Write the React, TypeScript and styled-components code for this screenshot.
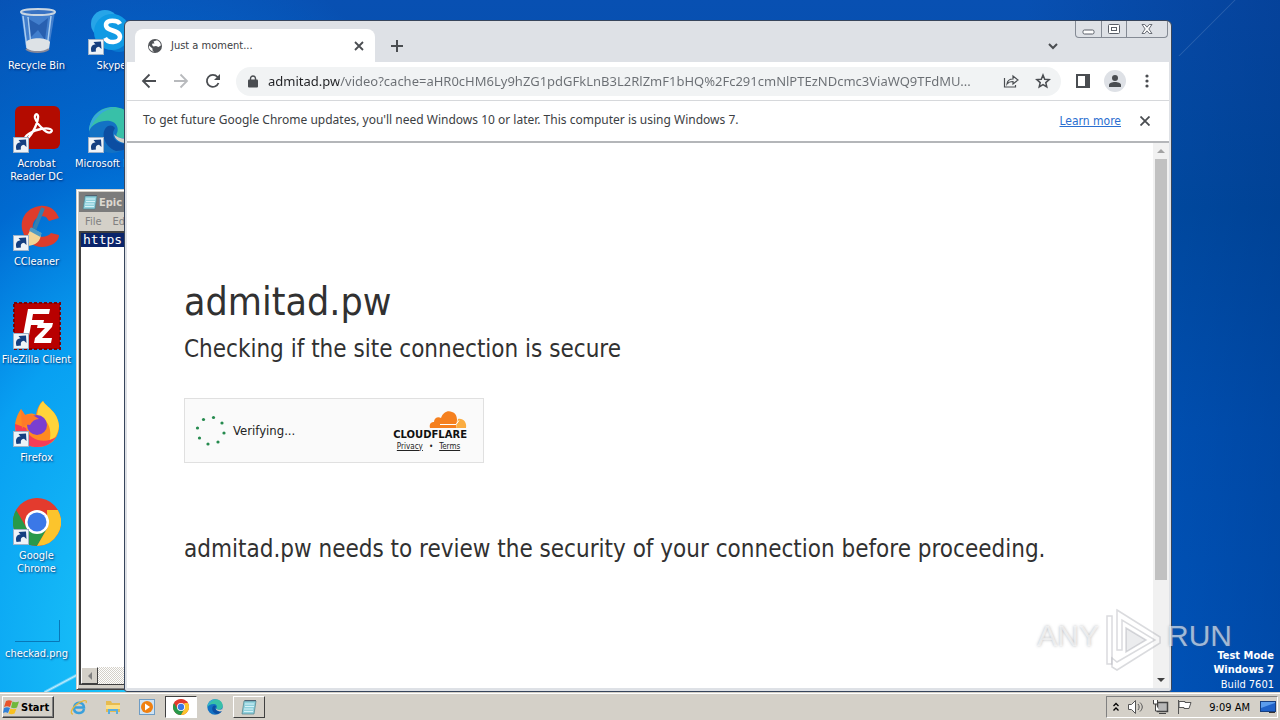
import React from "react";
import styled, { createGlobalStyle } from "styled-components";

const UI = '"DejaVu Sans Condensed", "DejaVu Sans", Tahoma, sans-serif';
const TEXT = '"Noto Sans", Tahoma, sans-serif';

const GlobalStyle = createGlobalStyle`
  * { box-sizing: border-box; }
  body { margin: 0; overflow: hidden; font-family: ${UI}; font-size: 11px; }
  h1, h2, p { margin: 0; font-weight: 400; }
  button, input { font-family: inherit; margin: 0; padding: 0; border: 0; background: none; }
  svg { display: block; flex: none; }
`;

const Screen = styled.div`
  display: flex;
  flex-direction: column;
  height: 100vh;
`;

const Desktop = styled.main`
  position: relative;
  flex: 1;
  min-height: 0;
  overflow: hidden;
  background:
    linear-gradient(135deg, transparent 49%, rgba(255, 255, 255, 0.12) 50%, transparent 51%) right 40px top 0 / 66px 56px no-repeat,
    linear-gradient(152deg, transparent 44%, rgba(255, 255, 255, 0.75) 50%, transparent 56%) left 44px bottom 0 / 36px 18px no-repeat,
    linear-gradient(90deg, transparent 80%, rgba(0, 40, 110, 0.35) 100%),
    radial-gradient(ellipse 34% 105% at 11% 95%, #1cc8fa 0%, #08a0f2 45%, rgba(0, 118, 226, 0.7) 68%, transparent 100%),
    linear-gradient(180deg, #0850b2 0%, #0050aa 30%, #0058c0 62%, #005cc8 100%);
`;

const Shortcuts = styled.nav`
  display: flex;
  gap: 2px;
  padding-top: 8px;
`;

const ShortcutColumn = styled.div`
  display: flex;
  flex-direction: column;
  gap: 24px;
  width: 73px;
`;

const Shortcut = styled.button`
  display: flex;
  flex-direction: column;
  align-items: center;
  justify-content: flex-start;
  gap: 3px;
  height: 74px;
  color: #fff;
  font-size: 11px;
  line-height: 13px;
  white-space: nowrap;
  text-shadow: 1px 1px 2px rgba(0, 20, 80, 0.8);
`;

const AppWindow = styled.section`
  position: absolute;
  z-index: 2;
  top: 20px;
  right: 108px;
  bottom: 0;
  left: 124px;
  display: flex;
  flex-direction: column;
  padding: 0 2px 3px;
  border: 1px solid #37455c;
  border-radius: 6px 6px 3px 3px;
  background: #dee1e6;
`;

const TabStrip = styled.header`
  display: flex;
  align-items: flex-start;
  height: 41px;
  padding: 0 1px 0 8px;
`;

const Tab = styled.div`
  display: flex;
  align-items: center;
  gap: 8px;
  width: 240px;
  height: 33px;
  margin-top: 8px;
  padding: 0 10px 0 12px;
  border-radius: 8px 8px 0 0;
  background: #fff;
  color: #3c4043;
`;

const TabTitle = styled.span`
  flex: 1;
  font-size: 11px;
`;

const IconButton = styled.button<{ $w?: number; $h?: number; $round?: boolean }>`
  display: flex;
  flex: none;
  align-items: center;
  justify-content: center;
  width: ${(p) => p.$w ?? 32}px;
  height: ${(p) => p.$h ?? 32}px;
  border-radius: ${(p) => (p.$round ? "50%" : "0")};
  background: ${(p) => (p.$round ? "#dee1e6" : "none")};
  color: #4a4d51;
`;

const NewTab = styled(IconButton)`
  width: 28px;
  height: 28px;
  margin: 11px auto 0 8px;
`;

const TabSearch = styled(IconButton)`
  width: 24px;
  height: 24px;
  margin: 13px 10px 0 0;
`;

const Caption = styled.div`
  display: flex;
  height: 17px;
  border: 1px solid #848a94;
  border-top: 0;
  border-radius: 0 0 4px 4px;
`;

const CaptionButton = styled.button<{ $wide?: boolean }>`
  display: flex;
  align-items: center;
  justify-content: center;
  width: ${(p) => (p.$wide ? 41 : 25)}px;
  & + & { border-left: 1px solid #848a94; }
`;

const Toolbar = styled.div`
  display: flex;
  align-items: center;
  height: 39px;
  padding: 0 1px 0 6px;
  border-bottom: 1px solid #d6d8db;
  background: #fff;
`;

const Omnibox = styled.label`
  display: flex;
  flex: 1;
  align-items: center;
  gap: 10px;
  min-width: 0;
  height: 29px;
  margin: 0 1px 0 7px;
  padding: 0 7px 0 12px;
  border-radius: 15px;
  background: #f1f3f4;
  color: #4a4d51;
`;

const Address = styled.input`
  flex: 1;
  min-width: 0;
  height: 20px;
  font-family: ${TEXT};
  font-size: 13px;
  color: #5f6368;
  background: linear-gradient(90deg, #202124 71px, #6a6e73 71px);
  background-clip: text;
  -webkit-text-fill-color: transparent;
  text-overflow: ellipsis;
`;

const InfoBar = styled.div`
  display: flex;
  align-items: center;
  height: 42px;
  padding: 0 8px 0 16px;
  border-bottom: 2px solid #b4b6b9;
  background: #fff;
  color: #3c4043;
  font-size: 12px;
`;

const InfoText = styled.p`
  flex: 1;
  font-family: ${TEXT};
  line-height: 18px;
  padding-bottom: 2px;
`;

const InfoLink = styled.a`
  margin-right: 8px;
  color: #2a6ed0;
`;

const Viewport = styled.div`
  display: flex;
  flex: 1;
  min-height: 0;
  background: #fff;
`;

const Page = styled.article`
  flex: 1;
  padding: 129px 24px 0 57px;
  color: #313131;
`;

const Host = styled.h1`
  font-size: 39px;
  line-height: 60px;
`;

const Lead = styled.h2`
  font-size: 24px;
  line-height: 34px;
`;

const Note = styled.p`
  margin-top: 69px;
  font-size: 24px;
  line-height: 34px;
`;

const Challenge = styled.div`
  display: flex;
  align-items: center;
  width: 300px;
  height: 65px;
  margin-top: 32px;
  padding: 0 16px 0 10px;
  border: 1px solid #e0e0e0;
  background: #fafafa;
  color: #232323;
`;

const Status = styled.span`
  flex: 1;
  margin-left: 6px;
  font-size: 13px;
`;

const Brand = styled.div`
  display: flex;
  flex-direction: column;
  align-items: flex-end;
  width: 78px;
`;

const Wordmark = styled.strong`
  width: 78px;
  color: #111;
  font: 700 10px/11px "DejaVu Sans", sans-serif;
  text-align: right;
`;

const Legal = styled.div`
  display: flex;
  justify-content: center;
  gap: 6px;
  width: 78px;
  padding-left: 1px;
  margin-top: 2px;
  font-size: 8px;
  line-height: 10px;
  a { color: #232323; }
`;

const ScrollTrack = styled.div`
  display: flex;
  flex-direction: column;
  align-items: center;
  width: 16px;
  background: #f1f1f1;
`;

const ScrollButton = styled.button`
  display: flex;
  align-items: center;
  justify-content: center;
  width: 16px;
  height: 16px;
`;

const ScrollRest = styled.div`
  display: flex;
  flex: 1;
  width: 12px;
`;

const ScrollThumb = styled.div`
  width: 12px;
  height: 82%;
  background: #c1c1c1;
`;

const NotepadWindow = styled.section`
  position: absolute;
  z-index: 1;
  top: 189px;
  right: 40%;
  bottom: 2px;
  left: 76px;
  display: flex;
  flex-direction: column;
  padding: 2px;
  border: 1px solid #d4d0c8;
  border-bottom-color: #404040;
  box-shadow: inset 1px 1px #fff, inset -1px -1px #808080;
  background: #d4d0c8;
`;

const NotepadTitle = styled.div`
  display: flex;
  align-items: center;
  gap: 1px;
  height: 20px;
  padding-left: 3px;
  background: #7c7c7c;
  color: #dcd8d0;
  font-size: 11px;
  font-weight: 700;
`;

const NotepadMenu = styled.div`
  display: flex;
  align-items: center;
  gap: 11px;
  height: 19px;
  padding-left: 6px;
  button { color: #808080; font-size: 11px; }
`;

const NotepadBody = styled.div`
  display: flex;
  flex: 1;
  flex-direction: column;
  border: 2px solid #404040;
  border-width: 2px 1px 1px 2px;
  margin-bottom: 2px;
  background: #fff;
`;

const NotepadLine = styled.p`
  flex: 1;
  font: 13px/14px "DejaVu Sans Mono", monospace;
  span { display: inline-block; width: 100%; padding-left: 2px; background: #0a246a; color: #fff; }
`;

const NotepadScroll = styled.div`
  height: 17px;
  background: repeating-conic-gradient(#fff 0 25%, #d4d0c8 0 50%) 0 0 / 2px 2px;
`;

const NotepadScrollButton = styled.button`
  display: flex;
  align-items: center;
  justify-content: center;
  width: 17px;
  height: 17px;
  border: 1px solid;
  border-color: #fff #404040 #404040 #fff;
  background: #d4d0c8;
`;

const BuildInfo = styled.div`
  position: absolute;
  right: 6px;
  bottom: 0;
  color: #fff;
  font-size: 11px;
  line-height: 14px;
  text-align: right;
  p { line-height: 15px; }
`;

const Watermark = styled.div`
  position: absolute;
  z-index: 3;
  right: 48px;
  bottom: 20px;
  display: flex;
  align-items: center;
  gap: 5px;
  color: rgba(255, 255, 255, 0.6);
  font: 30px/36px "Liberation Sans", sans-serif;
  text-shadow: 0 0 3px rgba(90, 95, 105, 0.45);
  pointer-events: none;
  span { margin-bottom: 8px; }
`;

const Taskbar = styled.footer`
  display: flex;
  flex: none;
  align-items: center;
  height: 28px;
  padding: 1px 2px 0 2px;
  border-top: 1px solid #d4d0c8;
  box-shadow: inset 0 1px #fff;
  background: #d4d0c8;
`;

const StartButton = styled.button`
  display: flex;
  align-items: center;
  gap: 1px;
  width: 52px;
  height: 22px;
  margin-right: 9px;
  border: 1px solid;
  border-color: #fff #404040 #404040 #fff;
  box-shadow: inset -1px -1px #808080;
  font-size: 11px;
  font-weight: 700;
`;

const TaskButton = styled.button<{ $state?: "active" | "open" }>`
  display: flex;
  align-items: center;
  justify-content: center;
  width: 32px;
  height: 22px;
  margin-right: 2px;
  border: 1px solid transparent;
  border-color: ${(p) =>
    p.$state === "active" ? "#404040 #fff #fff #404040" : p.$state === "open" ? "#fff #404040 #404040 #fff" : "transparent"};
  background: ${(p) => (p.$state === "active" ? "#fff" : "none")};
`;

const Tray = styled.div`
  display: flex;
  align-items: center;
  gap: 7px;
  height: 22px;
  margin-left: auto;
  padding: 0 1px 0 5px;
  border: 1px solid;
  border-color: #808080 #fff #fff #808080;
  font-size: 11px;
  time { margin: 0 3px 0 9px; }
`;

const ShortcutArrow = () => (
  <g transform="translate(0 31)">
    <rect x=".5" y=".5" width="15" height="15" fill="#eef3f8" stroke="#9fb2c8" />
    <path d="M3.500 13C2 8 4 5.500 7.500 5.500L5.500 3l7.500-.5.500 7.500-2.500-2.200C8 8 7.500 10 8 12.500z" fill="#153f80" />
  </g>
);

const IconBox = ({ children, arrow = true }: { children?: React.ReactNode; arrow?: boolean }) => (
  <svg width="48" height="48" viewBox="0 0 48 48">
    {children}
    {arrow && <ShortcutArrow />}
  </svg>
);

const ChromeMark = () => (
  <g>
    <circle cx="24" cy="24" r="24" fill="#e33b2e" />
    <path d="M3.2 12A24 24 0 0 0 24 48L34.4 30 24 24z" fill="#28994a" />
    <path d="M44.8 12A24 24 0 0 1 24 48L34.4 30 34 12z" fill="#fcc42c" />
    <path d="M24 12H44.8L40 7 24 0 8 6 3.2 12l10.4 18z" fill="#e33b2e" />
    <circle cx="24" cy="24" r="12" fill="#fff" />
    <circle cx="24" cy="24" r="9.5" fill="#3b78e7" />
  </g>
);

const EdgeMark = () => (
  <g>
    <circle cx="24" cy="24" r="23" fill="#1372c4" />
    <path d="M1 25C2 10 12 1 25 1c13 0 22 9 22 19 0 8-6 12-12 12-5 0-8-2-6-5 2-4 0-11-7-12C13 14 4 18 1 25z" fill="#38c0a8" />
    <path d="M1 25C2 10 14 0 28 2 14 3 7 12 1 25z" fill="#37a9dc" />
    <path d="M20 20c-8 5-5 20 8 25 8 0 13-3 17-9-10 4-20 0-20-8 0-3 1-4 2-6-2-3-5-3-7-2z" fill="#0c4ea2" />
    <path d="M26 28c1 8 11 11 19 8l2-8c-5 7-18 5-21 0z" fill="#d4d0c8" />
  </g>
);

const NotepadMark = () => (
  <g>
    <path d="M3 2h12l-2 13H1z" fill="#8fd0dc" stroke="#4d7f8a" strokeWidth=".7" />
    <path d="M4 5h9M4 7.500h9M3 10h9M3 12.500h9" stroke="#e8fbff" strokeWidth=".8" />
    <path d="M3 2h12v-1H4z" fill="#506070" />
  </g>
);

const WinFlag = () => (
  <svg width="17" height="16" viewBox="0 0 17 16">
    <path d="M3 2c2-1 4-1 6 0L7 8C5 7 3 7 1 8z" fill="#e8542c" />
    <path d="M9.500 2.500c2 1 4 1 6.500 0l-2 6c-2 1-4 1-6 0z" fill="#70b83c" />
    <path d="M1 9c2-1 4-1 6 0l-2 5c-2-1-3-1-5 0z" fill="#3080d8" />
    <path d="M7.500 9.500c2 1 4 1 6 0l-2 5c-2 1-4 1-6 0z" fill="#f8c020" />
  </svg>
);

export default function App() {
  return (
    <Screen>
      <GlobalStyle />
      <Desktop>
        <Shortcuts>
          <ShortcutColumn>
            <Shortcut>
              <IconBox arrow={false}>
                <path d="M8 4l5 36c5 5 19 5 23 0l6-36z" fill="#4e86d0" opacity=".85" />
                <path d="M14 10l3 20 8-8 7 10 3-22-9 7z" fill="#174b9c" opacity=".6" />
                <path d="M10 8l4 32M15 9l3 28M38 8l-4 32" stroke="#a9cdf0" strokeWidth="1.500" />
                <path d="M13 34c4-5 20-5 24 0l-1 7c-5 4-17 4-22 0z" fill="#dde2e6" />
                <ellipse cx="25" cy="4" rx="17" ry="3" fill="#3973c3" stroke="#c9d6e2" strokeWidth="2" />
                <path d="M13 41c6 4 17 4 23 0" stroke="#889" strokeWidth="2" fill="none" />
              </IconBox>
              Recycle Bin
            </Shortcut>
            <Shortcut>
              <IconBox>
                <rect x="2" y="0" width="45" height="43" rx="6" fill="#b30b00" />
                <path d="M13 33c-4-2 7-9 15-10 8-2 13 1 10 3-4 3-14-8-16-14-1-5 4-5 3 0-1 8-8 20-12 21z" fill="none" stroke="#fff" strokeWidth="2.300" />
              </IconBox>
              Acrobat<br />Reader DC
            </Shortcut>
            <Shortcut>
              <IconBox>
                <path d="M46 14C42 4 34 1 27 2 12 4 6 17 10 28c3 13 17 18 28 13 5-2 8-6 8-10l-8-2c-5 6-16 5-18-4-2-8 6-15 13-12l3 4z" fill="#dd3c2c" />
                <path d="M30 4l-9 22" stroke="#357fae" strokeWidth="4" />
                <path d="M18 24l10 5c0 8-5 13-15 13H3c8-3 11-8 15-18z" fill="#f2d596" />
                <path d="M17 25l11 6" stroke="#4f9bc4" strokeWidth="4" />
              </IconBox>
              CCleaner
            </Shortcut>
            <Shortcut>
              <IconBox>
                <rect x="1" y="1" width="46" height="46" fill="#b80000" stroke="#7c0204" strokeWidth="2" strokeDasharray="3 2" />
                <path d="M15 7h22l-1 5H20l-1 6h12l-1 5H18l-3 16H9z" fill="#fff" />
                <path d="M25 21h15l-1 4-10 11h10l-1 5H21l1-5 10-10h-8z" fill="#fff" />
              </IconBox>
              FileZilla Client
            </Shortcut>
            <Shortcut>
              <IconBox>
                <path d="M30 1c3 6 15 10 16 25 0 13-9 21-22 21S1 38 2 24C3 18 5 13 8 9l4 6c4-2 8-2 11 0 1-6 3-11 7-14z" fill="#ff8a20" />
                <path d="M30 1c3 6 15 10 16 25-1 9-5 14-10 17 3-9 1-20-5-23l-7-4c1-7 2-11 6-15z" fill="#ffd43a" />
                <path d="M2 24c0 14 9 23 22 23 9 0 15-4 19-10-10 7-27 4-30-9-4-2-8-3-11-4z" fill="#f43c58" />
                <circle cx="24" cy="25" r="10" fill="#7a3ed0" />
                <path d="M8 9l4 6c6-1 9 0 14 4-4 0-7 2-9 6-4-1-7 1-8 4z" fill="#ff7a28" />
              </IconBox>
              Firefox
            </Shortcut>
            <Shortcut>
              <IconBox><ChromeMark /></IconBox>
              Google<br />Chrome
            </Shortcut>
            <Shortcut>
              <IconBox arrow={false}>
                <path d="M2 45.500H46.500V24" fill="none" stroke="#0878b8" />
              </IconBox>
              checkad.png
            </Shortcut>
          </ShortcutColumn>
          <ShortcutColumn>
            <Shortcut>
              <IconBox>
                <circle cx="17" cy="16" r="14" fill="#27a5e8" />
                <circle cx="31" cy="30" r="14" fill="#0878d0" />
                <circle cx="24" cy="24" r="18" fill="#109ae4" />
                <path d="M32 16c-2-4-14-5-14 1 0 7 14 4 14 12 0 6-12 7-15 1" fill="none" stroke="#fff" strokeWidth="4.500" />
              </IconBox>
              Skype
            </Shortcut>
            <Shortcut>
              <IconBox><EdgeMark /></IconBox>
              Microsoft Edge
            </Shortcut>
          </ShortcutColumn>
        </Shortcuts>

        <NotepadWindow>
          <NotepadTitle>
            <svg width="16" height="16" viewBox="0 0 16 16"><NotepadMark /></svg>
            Epic
          </NotepadTitle>
          <NotepadMenu>
            <button>File</button>
            <button>Edit</button>
          </NotepadMenu>
          <NotepadBody>
            <NotepadLine><span>https</span></NotepadLine>
            <NotepadScroll>
              <NotepadScrollButton aria-label="Scroll left">
                <svg width="6" height="8" viewBox="0 0 6 8"><path d="M5 0v8L1 4z" fill="#808080" /></svg>
              </NotepadScrollButton>
            </NotepadScroll>
          </NotepadBody>
        </NotepadWindow>

        <AppWindow>
          <TabStrip>
            <Tab>
              <svg width="16" height="16" viewBox="0 0 16 16">
                <circle cx="8" cy="8" r="7" fill="#505357" />
                <path d="M2 7.500l3.500 3v2l1.500 1C4 13.500 1.500 11 2 7.500zM6.500 3.500L10 2.200c2.500 1 4 3.200 3.800 5.300L11.500 9 9 8l-2.500.5L5 7l.5-1.500h2z" fill="#fff" />
              </svg>
              <TabTitle>Just a moment...</TabTitle>
              <IconButton $w={12} $h={16} aria-label="Close tab">
                <svg width="10" height="10" viewBox="0 0 10 10" stroke="currentColor" strokeWidth="1.800"><path d="M1 1l8 8M9 1L1 9" /></svg>
              </IconButton>
            </Tab>
            <NewTab aria-label="New tab">
              <svg width="12" height="12" viewBox="0 0 12 12" stroke="currentColor" strokeWidth="2"><path d="M6 0v12M0 6h12" /></svg>
            </NewTab>
            <TabSearch aria-label="Search tabs">
              <svg width="10" height="7" viewBox="0 0 10 7" fill="none" stroke="currentColor" strokeWidth="2"><path d="M1 1l4 4 4-4" /></svg>
            </TabSearch>
            <Caption>
              <CaptionButton aria-label="Minimize">
                <svg width="13" height="12" viewBox="0 0 13 12" fill="#fff" stroke="#5a5f68"><rect x="1" y="7" width="11" height="4" rx="1.500" /></svg>
              </CaptionButton>
              <CaptionButton aria-label="Maximize">
                <svg width="13" height="11" viewBox="0 0 13 11" fill="#fff" stroke="#5a5f68"><rect x=".5" y=".5" width="11" height="9" rx="1" /><rect x="3.500" y="3.500" width="5" height="3" /></svg>
              </CaptionButton>
              <CaptionButton $wide aria-label="Close">
                <svg width="12" height="10" viewBox="0 0 13 11" fill="#fff" stroke="#5a5f68"><path d="M1 .5h3l2.500 3L9 .5h3l-3.500 5L12 10.500H9l-2.500-3-2.500 3H1l3.500-5z" /></svg>
              </CaptionButton>
            </Caption>
          </TabStrip>

          <Toolbar>
            <IconButton aria-label="Back">
              <svg width="16" height="16" viewBox="0 0 16 16" fill="none" stroke="currentColor" strokeWidth="1.800"><path d="M15 8H2M8.500 1.500L2 8l6.500 6.500" /></svg>
            </IconButton>
            <IconButton aria-label="Forward">
              <svg width="16" height="16" viewBox="0 0 16 16" fill="none" stroke="#b8babd" strokeWidth="1.800"><path d="M1 8h13M7.500 1.500L14 8l-6.500 6.500" /></svg>
            </IconButton>
            <IconButton aria-label="Reload">
              <svg width="16" height="16" viewBox="0 0 16 16" fill="none" stroke="currentColor" strokeWidth="1.800"><path d="M13.500 10A6 6 0 1 1 12.500 4L14 6" /><path d="M15 1v6H9z" fill="currentColor" stroke="none" /></svg>
            </IconButton>
            <Omnibox>
              <svg width="10" height="13" viewBox="0 0 10 13"><rect y="4.500" width="10" height="8" rx="1" fill="currentColor" /><path d="M2.500 5V3.500a2.500 2.500 0 0 1 5 0V5" fill="none" stroke="currentColor" strokeWidth="1.400" /></svg>
              <Address
                aria-label="Address and search bar"
                defaultValue="admitad.pw/video?cache=aHR0cHM6Ly9hZG1pdGFkLnB3L2RlZmF1bHQ%2Fc291cmNlPTEzNDcmc3ViaWQ9TFdMU..."
              />
              <IconButton $w={22} aria-label="Share">
                <svg width="16" height="16" viewBox="0 0 16 16" fill="none" stroke="currentColor" strokeWidth="1.200"><path d="M1.500 5v9h11v-2M4 11c.5-4 3-5 6-5V3l5 4-5 4V8.500c-3 0-4.500.5-6 2.500z" /></svg>
              </IconButton>
              <IconButton $w={22} aria-label="Bookmark">
                <svg width="16" height="16" viewBox="0 0 16 16" fill="none" stroke="currentColor" strokeWidth="1.500"><path d="M8 2l1.700 4.200 4.500.4-3.400 3 1 4.400L8 11.600 4.200 14l1-4.400-3.400-3 4.500-.4z" /></svg>
              </IconButton>
            </Omnibox>
            <IconButton $w={42} aria-label="Side panel">
              <svg width="14" height="14" viewBox="0 0 14 14"><rect x="1" y="1" width="12" height="12" fill="none" stroke="currentColor" strokeWidth="2" /><path d="M9 1h4v12H9z" fill="currentColor" /></svg>
            </IconButton>
            <IconButton $w={22} $h={22} $round aria-label="Profile">
              <svg width="12" height="12" viewBox="0 0 12 12" fill="currentColor"><circle cx="6" cy="3" r="3" /><path d="M0 12v-2c0-4 12-4 12 0v2z" /></svg>
            </IconButton>
            <IconButton $w={42} aria-label="Menu">
              <svg width="4" height="14" viewBox="0 0 4 14" fill="currentColor"><circle cx="2" cy="2" r="1.600" /><circle cx="2" cy="7" r="1.600" /><circle cx="2" cy="12" r="1.600" /></svg>
            </IconButton>
          </Toolbar>

          <InfoBar>
            <InfoText>To get future Google Chrome updates, you'll need Windows 10 or later. This computer is using Windows 7.</InfoText>
            <InfoLink href="#learn">Learn more</InfoLink>
            <IconButton aria-label="Dismiss">
              <svg width="10" height="10" viewBox="0 0 10 10" stroke="currentColor" strokeWidth="1.800"><path d="M.5.5l9 9M9.500.5l-9 9" /></svg>
            </IconButton>
          </InfoBar>

          <Viewport>
            <Page>
              <Host>admitad.pw</Host>
              <Lead>Checking if the site connection is secure</Lead>
              <Challenge>
                <svg width="32" height="32" viewBox="0 0 32 32" fill="#258a4e">
                  <circle cx="18.500" cy="2.500" r="1.600" /><circle cx="27" cy="8" r="1.600" /><circle cx="29" cy="18" r="1.600" />
                  <circle cx="23" cy="27" r="1.600" /><circle cx="13" cy="29" r="1.600" /><circle cx="4.500" cy="23" r="1.600" />
                  <circle cx="2.500" cy="13" r="1.600" /><circle cx="8.500" cy="4.500" r="1.600" />
                </svg>
                <Status>Verifying...</Status>
                <Brand>
                  <svg width="38" height="19" viewBox="0 0 38 19">
                    <path d="M1 18c-1-4 1-6 4-6 0-4 4-6 7-4C14 2 19 0 23 2c4 1 5 5 5 8l-1 8z" fill="#f5801f" />
                    <path d="M27 18l2-9c5-1 9 3 8 9z" fill="#fbad41" />
                    <path d="M11 14.500h16l3-4" fill="none" stroke="#fff" />
                  </svg>
                  <Wordmark>CLOUDFLARE</Wordmark>
                  <Legal><a href="#privacy">Privacy</a><span>•</span><a href="#terms">Terms</a></Legal>
                </Brand>
              </Challenge>
              <Note>admitad.pw needs to review the security of your connection before proceeding.</Note>
            </Page>
            <ScrollTrack>
              <ScrollButton aria-label="Scroll up">
                <svg width="8" height="4" viewBox="0 0 8 4"><path d="M0 4h8L4 0z" fill="#a3a3a3" /></svg>
              </ScrollButton>
              <ScrollRest><ScrollThumb /></ScrollRest>
              <ScrollButton aria-label="Scroll down">
                <svg width="8" height="4" viewBox="0 0 8 4"><path d="M0 0h8L4 4z" fill="#404040" /></svg>
              </ScrollButton>
            </ScrollTrack>
          </Viewport>
        </AppWindow>

        <BuildInfo>
          <div><b>Test Mode</b></div>
          <div><b>Windows 7</b></div>
          <p>Build 7601</p>
        </BuildInfo>
        <Watermark>
          <span>ANY</span>
          <svg width="58" height="64" viewBox="0 0 58 64" fill="rgba(255,255,255,.4)" stroke="rgba(150,153,160,.35)" strokeWidth="1.500">
            <path d="M3 8h5v48H3z" />
            <path d="M13 2l43 27v6L13 62l-5-3V50l5 4 38-22-33-20v30h-5z" />
            <path d="M22 20l20 12-20 12z" fill="rgba(205,207,212,.4)" />
          </svg>
          <span>RUN</span>
        </Watermark>
      </Desktop>

      <Taskbar>
        <StartButton><WinFlag />Start</StartButton>
        <TaskButton aria-label="Internet Explorer">
          <svg width="18" height="16" viewBox="0 0 18 16" fill="none">
            <path d="M14 10c-1 6-10 5-10-1 0-7 10-7 10-.5H4.500" stroke="#3aa0dc" strokeWidth="2.500" />
            <path d="M3 15C0 15 1 10 6 6c6-5 12-6 10-2" stroke="#e8b83c" strokeWidth="1.300" />
          </svg>
        </TaskButton>
        <TaskButton aria-label="File Explorer">
          <svg width="16" height="16" viewBox="0 0 16 16">
            <path d="M1 2h5l1 2h8v9H1z" fill="#e6bb50" /><path d="M1 6h14v4H1z" fill="#fae08a" />
            <path d="M4 15V11h8v4" fill="none" stroke="#5aaede" strokeWidth="2" />
          </svg>
        </TaskButton>
        <TaskButton aria-label="Media Player">
          <svg width="16" height="16" viewBox="0 0 16 16">
            <rect x=".5" y=".5" width="15" height="15" fill="#cfe3f4" stroke="#6e9cc4" />
            <circle cx="8" cy="8" r="6" fill="#f08010" /><path d="M6 4.500l5 3.500-5 3.500z" fill="#fff" />
          </svg>
        </TaskButton>
        <TaskButton $state="active" aria-label="Google Chrome">
          <svg width="16" height="16" viewBox="0 0 48 48"><ChromeMark /></svg>
        </TaskButton>
        <TaskButton aria-label="Microsoft Edge">
          <svg width="16" height="16" viewBox="0 0 48 48"><EdgeMark /></svg>
        </TaskButton>
        <TaskButton $state="open" aria-label="Notepad">
          <svg width="16" height="16" viewBox="0 0 16 16"><NotepadMark /></svg>
        </TaskButton>
        <Tray>
          <svg width="8" height="10" viewBox="0 0 8 10" fill="none" stroke="#000" strokeWidth="1.300"><path d="M1.500 4L4 1.500 6.500 4M1.500 8.500L4 6l2.500 2.500" /></svg>
          <svg width="18" height="16" viewBox="0 0 18 16" fill="#fff" stroke="#555"><path d="M1.500 5.500h3l4-4v13l-4-4h-3z" /><path d="M11 5c1.500 2 1.500 4 0 6M13 3.500c3 3 3 6 0 9" fill="none" /></svg>
          <svg width="17" height="16" viewBox="0 0 17 16" fill="#fff" stroke="#444"><rect x="5.500" y="3.500" width="10" height="9" fill="#b8b8b8" strokeWidth="1.500" /><path d="M7 14.500h7M1.500 1v4h4V1M3.500 5v7h4" /></svg>
          <svg width="17" height="16" viewBox="0 0 17 16" fill="#fff" stroke="#555"><path d="M2.500 1v14M3 2.500h6v1h6l-2 6H8v-1H3z" /></svg>
          <time>9:09 AM</time>
          <svg width="16" height="14" viewBox="0 0 16 14"><rect x=".5" y="1.500" width="15" height="10" fill="#1f62c8" stroke="#173f80" /><path d="M1 8l14-5v-1H1z" fill="#5b9cec" /><path d="M9 12h6v1H9z" fill="#333" /></svg>
        </Tray>
      </Taskbar>
    </Screen>
  );
}
